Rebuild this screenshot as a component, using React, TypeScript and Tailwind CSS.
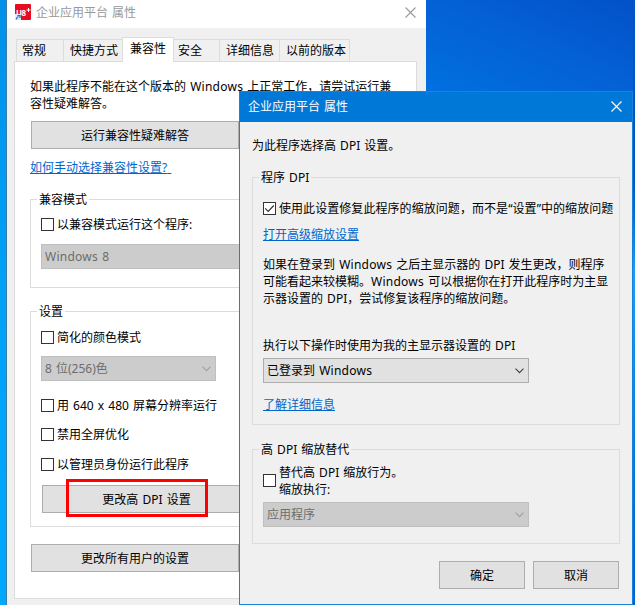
import type { ReactNode } from 'react';
import clsx from 'clsx';

type BoxProps = {
  className?: string;
  children?: ReactNode;
};

type SelectBoxProps = {
  value: ReactNode;
  disabled?: boolean;
  className?: string;
};

type CheckRowProps = {
  checked?: boolean;
  className?: string;
  children: ReactNode;
};

type GroupProps = {
  title: string;
  className?: string;
  children: ReactNode;
};

const tabs = [
  { label: '常规', className: 'w-[48px] pl-[5px]' },
  { label: '快捷方式', className: '-ml-px w-[60px] pl-[6px]' },
  { label: '兼容性', active: true, className: '-ml-px w-[52px] pl-[7px]' },
  { label: '安全', className: '-ml-px w-[47px] pl-[4px]' },
  { label: '详细信息', className: '-ml-px w-[61px] pl-[6px]' },
  { label: '以前的版本', className: '-ml-px w-[71px] pl-[6px]' },
];

function Windows() {
  return <span className="tracking-[0.25px]">Windows</span>;
}

function CloseIcon({ className }: { className?: string }) {
  return (
    <svg className={className} width="11" height="11" viewBox="0 0 11 11" fill="none" stroke="currentColor">
      <path d="M0.5 0.5l10 10M10.5 0.5l-10 10" strokeWidth="1.1" />
    </svg>
  );
}

function AppIcon() {
  return (
    <div className="relative size-4 overflow-hidden rounded-[1px] bg-[#e60b20]">
      <span className="absolute left-[1px] top-[3px] text-[8px] font-bold leading-[11px] tracking-[-0.5px] text-white">
        U8
      </span>
      <svg className="absolute inset-0" width="16" height="16" viewBox="0 0 16 16">
        <path d="M13.5 4v4M11.5 6h4" stroke="#fff" strokeWidth="1" />
        <rect x="0" y="10" width="6" height="6" fill="#dfeaf5" />
        <path d="M1.5 15.5c0-1.8.6-2.6 2-3M2.5 11.5H5V14" fill="none" stroke="#1767b5" strokeWidth="1.2" />
      </svg>
    </div>
  );
}

function Button({ className, children }: BoxProps) {
  return (
    <button
      type="button"
      className={clsx(
        'flex h-7 shrink-0 items-center justify-center border border-[#adadad] bg-[#e1e1e1] [word-spacing:1px]',
        className,
      )}
    >
      {children}
    </button>
  );
}

function Link({ className, children }: BoxProps) {
  return (
    <a href="#" className={clsx('block w-fit text-[#0066cc] underline underline-offset-1', className)}>
      {children}
    </a>
  );
}

function SelectBox({ value, disabled, className }: SelectBoxProps) {
  return (
    <div
      className={clsx(
        'flex h-[25px] items-center justify-between border pl-[3px] pr-1',
        disabled ? 'border-[#bfbfbf] bg-[#cccccc] text-[#6d6d6d]' : 'border-[#adadad] bg-[#e1e1e1]',
        className,
      )}
    >
      <span>{value}</span>
      <svg
        className={disabled ? 'text-[#a0a0a0]' : 'text-[#404040]'}
        width="9"
        height="6"
        viewBox="0 0 9 6"
        fill="none"
        stroke="currentColor"
      >
        <path d="M0.5 0.7l4 4 4-4" strokeWidth="1.1" />
      </svg>
    </div>
  );
}

function CheckRow({ checked, className, children }: CheckRowProps) {
  return (
    <div className={clsx('flex items-center gap-[3px]', className)}>
      <span className="flex size-[13px] shrink-0 items-center justify-center border border-[#333] bg-white">
        {checked && (
          <svg width="11" height="11" viewBox="0 0 11 11" fill="none" stroke="#333">
            <path d="M1.2 5.3l3 3 5.6-5.8" strokeWidth="1.2" />
          </svg>
        )}
      </span>
      <div className="whitespace-nowrap">{children}</div>
    </div>
  );
}

function Group({ title, className, children }: GroupProps) {
  return (
    <fieldset className={clsx('min-w-0 border border-[#dcdcdc] pl-[10px]', className)}>
      <legend className="-ml-1 px-[2px]">{title}</legend>
      {children}
    </fieldset>
  );
}

function PropertiesWindow() {
  return (
    <div className="absolute left-[6px] top-0 flex h-[605px] w-[420px] flex-col border-l border-[#3a7ca8] bg-[#f0f0f0]">
      <div className="flex h-7 items-start bg-white pl-2 pr-[10px] text-[#999]">
        <div className="mt-1">
          <AppIcon />
        </div>
        <span className="ml-[5px] mt-1">企业应用平台 属性</span>
        <CloseIcon className="ml-auto mt-[7px]" />
      </div>

      <div className="ml-[9px] mt-[9px] flex h-6 items-end">
        {tabs.map((tab) => (
          <div
            key={tab.label}
            className={clsx(
              'shrink-0 whitespace-nowrap border border-b-0 border-[#dcdcdc]',
              tab.active ? 'relative z-10 -mb-px h-[25px] bg-white pt-[2px]' : 'h-[22px] bg-[#f0f0f0] pt-[2px]',
              tab.className,
            )}
          >
            {tab.label}
          </div>
        ))}
      </div>

      <div className="ml-[7px] h-[538px] w-[403px] border border-[#dcdcdc] bg-white pl-[15px]">
        <p className="mt-[16px] whitespace-nowrap">
          如果此程序不能在这个版本的 <Windows /> 上正常工作，请尝试运行兼
          <br />
          容性疑难解答。
        </p>
        <Button className="ml-px mt-[9px] w-[208px]">运行兼容性疑难解答</Button>
        <Link className="mt-[10px]">如何手动选择兼容性设置?{'\u00a0'}</Link>

        <Group title="兼容模式" className="mt-[15px] h-[97px] w-[372px]">
          <CheckRow className="mt-2">以兼容模式运行这个程序:</CheckRow>
          <SelectBox value={<><Windows /> 8</>} disabled className="mt-[11px] w-[230px]" />
        </Group>

        <Group title="设置" className="mt-[15px] h-[224px] w-[372px]">
          <CheckRow className="mt-[9px]">简化的颜色模式</CheckRow>
          <SelectBox value="8 位(256)色" disabled className="mt-[10px] w-[175px]" />
          <CheckRow className="mt-4">用 640 x 480 屏幕分辨率运行</CheckRow>
          <CheckRow className="mt-3">禁用全屏优化</CheckRow>
          <CheckRow className="mt-[13px]">以管理员身份运行此程序</CheckRow>
          <div className="relative ml-px mt-3 w-[209px]">
            <Button className="w-full">更改高 DPI 设置</Button>
            <div className="absolute -top-[6px] left-6 h-[38px] w-[142px] border-[3px] border-[#fe0000]" />
          </div>
        </Group>

        <Button className="ml-px mt-[17px] w-[208px]">更改所有用户的设置</Button>
      </div>
    </div>
  );
}

function DpiWindow() {
  return (
    <div className="absolute left-[239px] top-[91px] flex h-[514px] w-[394px] flex-col border border-[#1883d7] bg-[#f0f0f0]">
      <div className="flex h-[30px] items-start justify-between bg-[#0078d7] pl-2 pr-[10px] text-white">
        <span className="mt-[6px]">企业应用平台 属性</span>
        <CloseIcon className="mt-[9px]" />
      </div>

      <div className="pl-3">
        <p className="mt-[15px]">为此程序选择高 DPI 设置。</p>

        <Group title="程序 DPI" className="mt-[15px] h-[256px] w-[368px]">
          <CheckRow checked className="mt-[14px]">
            <span className="tracking-[0.06px]">使用此设置修复此程序的缩放问题，而不是“设置”中的缩放问题</span>
          </CheckRow>
          <Link className="mt-[9px]">打开高级缩放设置</Link>
          <p className="mt-[13px] whitespace-nowrap">
            如果在登录到 <Windows /> 之后主显示器的 DPI 发生更改，则程序
            <br />
            可能看起来较模糊。<Windows /> 可以根据你在打开此程序时为主显
            <br />
            示器设置的 DPI，尝试修复该程序的缩放问题。
          </p>
          <p className="mt-[30px]">执行以下操作时使用为我的主显示器设置的 DPI</p>
          <SelectBox value={<>已登录到 <Windows /></>} className="mt-1 w-[266px]" />
          <Link className="mt-[13px]">了解详细信息</Link>
        </Group>

        <Group title="高 DPI 缩放替代" className="mt-4 h-[103px] w-[368px]">
          <CheckRow className="mt-[5px]">
            <p className="pt-px">
              替代高 DPI 缩放行为。
              <br />
              缩放执行:
            </p>
          </CheckRow>
          <SelectBox value="应用程序" disabled className="mt-1 w-[266px]" />
        </Group>

        <div className="mt-[17px] flex justify-end gap-2 pr-[13px]">
          <Button className="w-[86px]">确定</Button>
          <Button className="w-[86px]">取消</Button>
        </div>
      </div>
    </div>
  );
}

export default function App() {
  return (
    <div className="relative flex h-[605px] w-[635px] overflow-hidden font-['Noto_Sans','Noto_Sans_CJK_SC',sans-serif] text-[12px] leading-[17px] text-black [word-spacing:1px]">
      <div className="w-[426px] bg-linear-to-b from-[#0090ea] via-[#00a2f8] to-[#00a8ff]" />
      <div className="h-[92px] flex-1 bg-linear-to-tr from-[#0070e0] via-[#0462d5] to-[#0450c8]" />
      <div className="w-[2px] bg-linear-to-b from-[#0453cb] from-30% via-[#1a9bff] via-45% to-[#0062d8] to-95%" />
      <PropertiesWindow />
      <DpiWindow />
    </div>
  );
}
